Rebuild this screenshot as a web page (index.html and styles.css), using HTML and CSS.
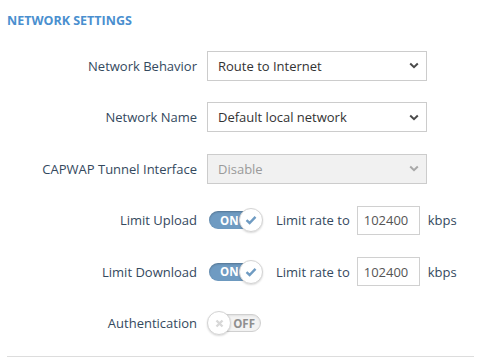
FILE: index.html
```html
<!DOCTYPE html>
<html>
<head>
<meta charset="utf-8">
<link rel="stylesheet" href="styles.css">
</head>
<body>
<div class="panel">
  <h2 class="title">NETWORK SETTINGS</h2>
  <div class="form">
    <div class="label">Network Behavior</div>
    <div class="field"><div class="select"><span>Route to Internet</span><svg class="chev" width="10" height="7" viewBox="0 0 10 7"><path d="M1.2 1.5 L5 5.2 L8.8 1.5" fill="none" stroke="#4a4a4a" stroke-width="2"/></svg></div></div>

    <div class="label">Network Name</div>
    <div class="field"><div class="select"><span>Default local network</span><svg class="chev" width="10" height="7" viewBox="0 0 10 7"><path d="M1.2 1.5 L5 5.2 L8.8 1.5" fill="none" stroke="#4a4a4a" stroke-width="2"/></svg></div></div>

    <div class="label">CAPWAP Tunnel Interface</div>
    <div class="field"><div class="select disabled"><span>Disable</span><svg class="chev" width="10" height="7" viewBox="0 0 10 7"><path d="M1.2 1.5 L5 5.2 L8.8 1.5" fill="none" stroke="#a8a8a8" stroke-width="2"/></svg></div></div>

    <div class="label">Limit Upload</div>
    <div class="field">
      <div class="toggle on"><span class="tlabel">ON</span><span class="knob"><svg width="12" height="10" viewBox="0 0 12 10"><path d="M1.5 5.2 L4.6 8 L10.5 1.8" fill="none" stroke="#6f9bc2" stroke-width="2.4"/></svg></span></div>
      <span class="rate">Limit rate to</span>
      <div class="num">102400</div>
      <span class="unit">kbps</span>
    </div>

    <div class="label">Limit Download</div>
    <div class="field">
      <div class="toggle on"><span class="tlabel">ON</span><span class="knob"><svg width="12" height="10" viewBox="0 0 12 10"><path d="M1.5 5.2 L4.6 8 L10.5 1.8" fill="none" stroke="#6f9bc2" stroke-width="2.4"/></svg></span></div>
      <span class="rate">Limit rate to</span>
      <div class="num">102400</div>
      <span class="unit">kbps</span>
    </div>

    <div class="label">Authentication</div>
    <div class="field">
      <div class="toggle off"><span class="knob"><svg width="9" height="9" viewBox="0 0 9 9"><path d="M1.5 1.5 L7.5 7.5 M7.5 1.5 L1.5 7.5" fill="none" stroke="#d8d8d8" stroke-width="2.4"/></svg></span><span class="tlabel">OFF</span></div>
    </div>
  </div>
  <div class="rule"></div>
</div>
</body>
</html>
```
FILE: styles.css
```css
html, body {
  margin: 0;
  padding: 0;
  background: #fff;
}
body {
  font-family: "Open Sans", "Liberation Sans", sans-serif;
  color: #34495e;
  width: 481px;
  height: 359px;
  overflow: hidden;
}
.panel {
  padding: 0 7px;
}
.title {
  margin: 0;
  height: 40px;
  line-height: 41px;
  font-size: 12.5px;
  font-weight: 700;
  color: #4a8fcf;
}
.form {
  display: grid;
  grid-template-columns: 190px 1fr;
  grid-auto-rows: 51.5px;
  column-gap: 10px;
  align-items: center;
}
.label {
  text-align: right;
  font-size: 13px;
  color: #34495e;
}
.field {
  display: flex;
  align-items: center;
}
.select {
  box-sizing: border-box;
  width: 220px;
  height: 30px;
  border: 1px solid #cccccc;
  background: #fff;
  display: flex;
  align-items: center;
  justify-content: space-between;
  padding: 0 7px 0 10px;
  font-size: 13px;
  color: #333;
}
.select.disabled {
  background: #f1f1f1;
  color: #9a9a9a;
}
.toggle {
  box-sizing: border-box;
  position: relative;
  width: 52px;
  height: 18px;
  border-radius: 9px;
  display: flex;
  align-items: center;
  font-size: 11.5px;
  font-weight: 700;
  margin-left: 2px;
}
.toggle.on {
  background: #6f9bc2;
  box-shadow: inset 0 1px 2px rgba(0,0,0,0.25);
  color: #fff;
}
.toggle.on .tlabel {
  padding-left: 11px;
}
.toggle.off {
  background: #f3f3f3;
  border: 1px solid #d0d0d0;
  box-shadow: inset 0 1px 2px rgba(0,0,0,0.08);
  color: #8f8f8f;
  justify-content: flex-end;
}
.toggle.off .tlabel {
  padding-right: 5px;
}
.knob {
  position: absolute;
  top: -3px;
  width: 24px;
  height: 24px;
  box-sizing: border-box;
  border-radius: 50%;
  background: #fff;
  border: 1px solid #d4d4d4;
  box-shadow: 0 1px 2px rgba(0,0,0,0.15);
  display: flex;
  align-items: center;
  justify-content: center;
}
.toggle.on .knob {
  right: -2px;
}
.toggle.off .knob {
  left: -3px;
  top: -4px;
}
.rate {
  font-size: 13px;
  margin-left: 15px;
  color: #34495e;
}
.num {
  box-sizing: border-box;
  width: 63px;
  height: 29px;
  margin-left: 7px;
  border: 1px solid #d0d0d0;
  font-size: 13px;
  color: #555;
  display: flex;
  align-items: center;
  padding-left: 6px;
}
.unit {
  font-size: 13px;
  margin-left: 8px;
  color: #34495e;
}
.rule {
  margin-top: 7px;
  border-top: 1px solid #dddddd;
}
```
